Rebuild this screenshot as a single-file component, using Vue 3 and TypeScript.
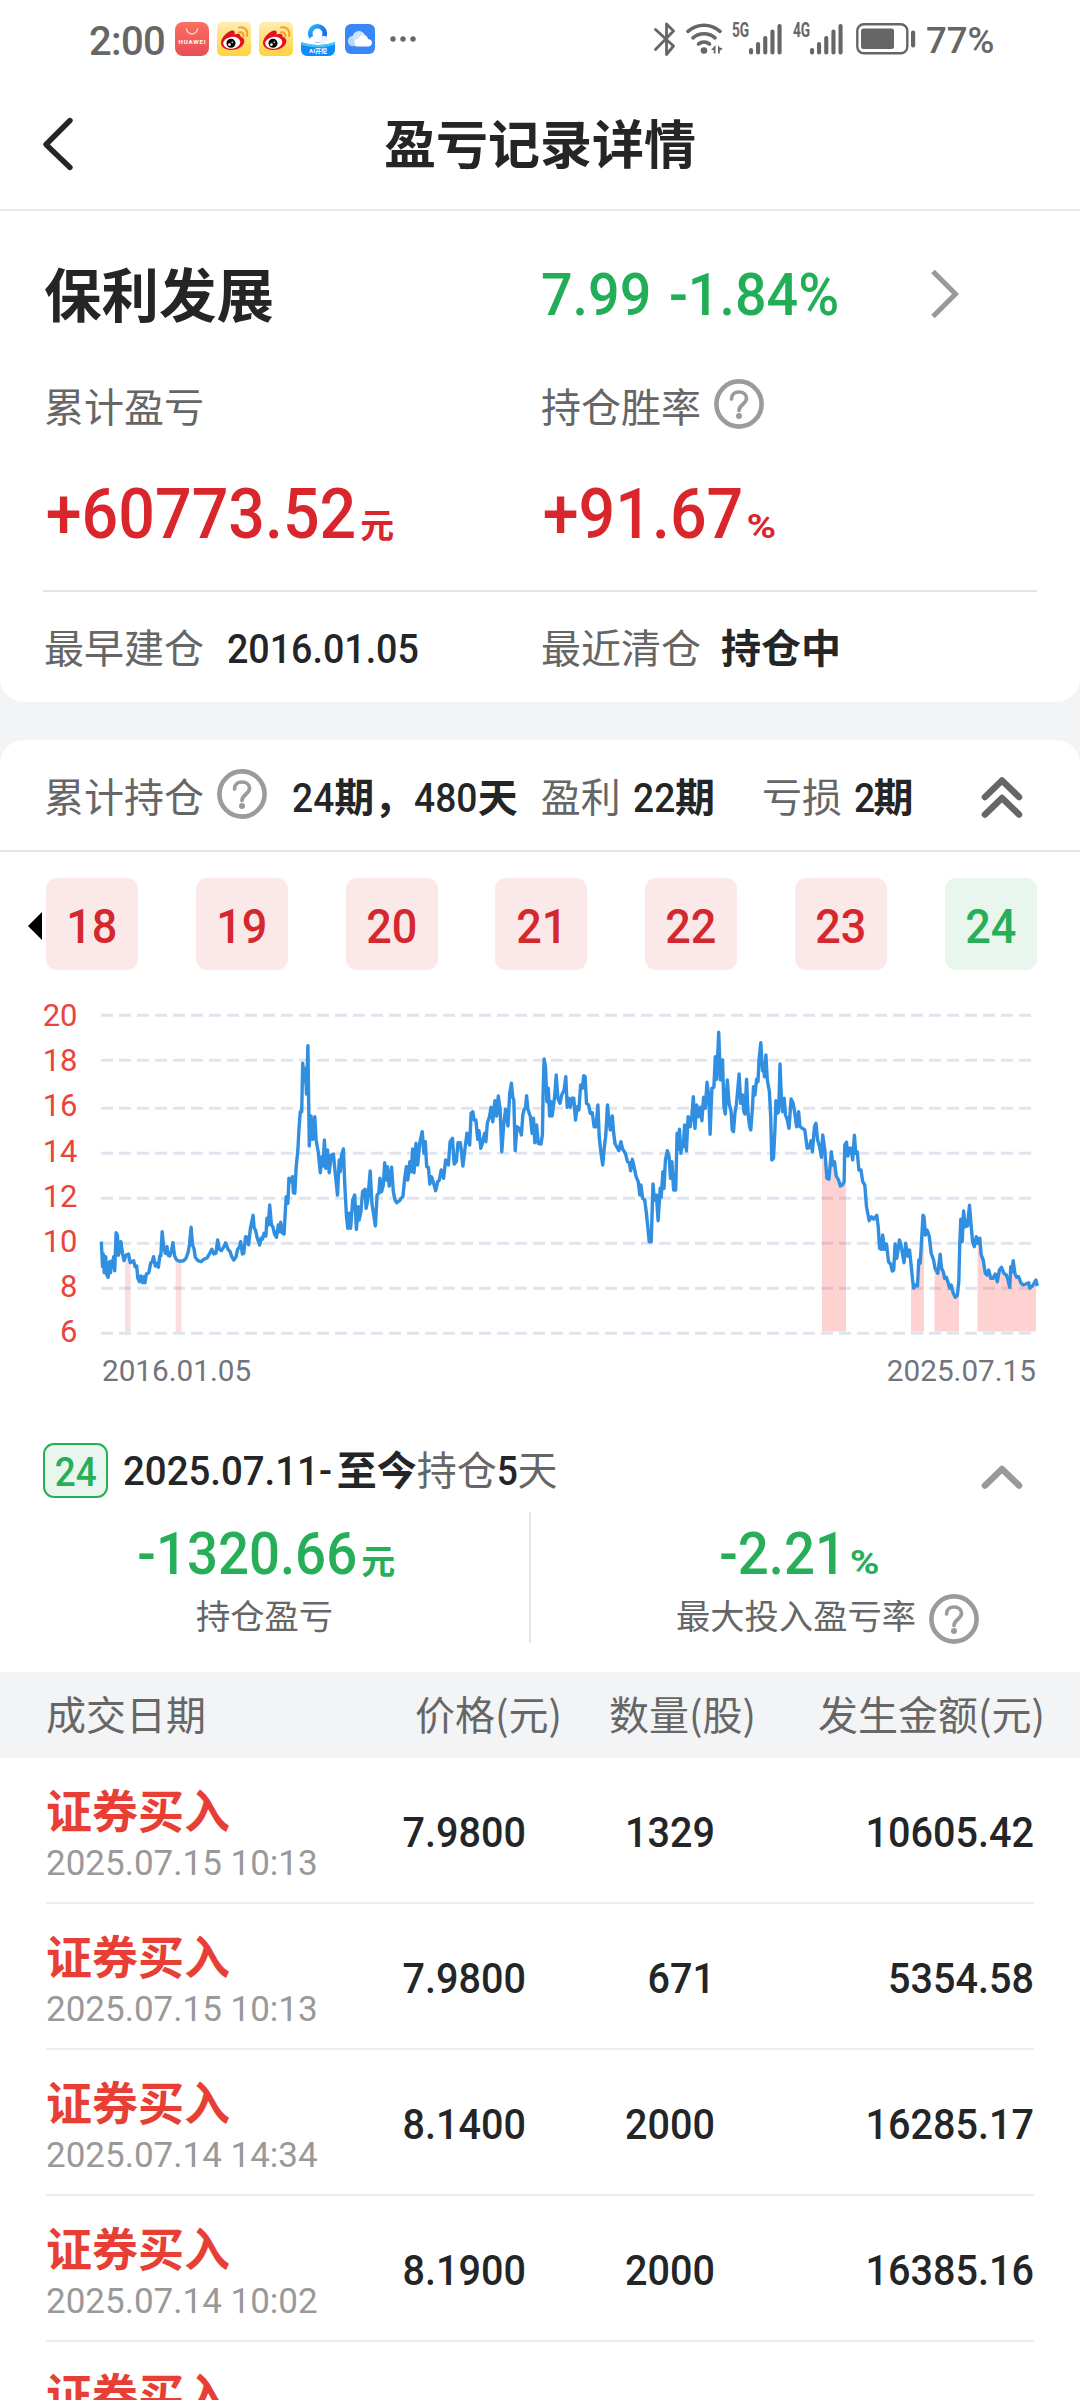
<script setup lang="ts">
import { computed } from 'vue'

interface Period { no: number; win: boolean }
interface Trade { time?: string; price?: string; qty?: string; amount?: string }

const periods: Period[] = [18, 19, 20, 21, 22, 23, 24].map((no) => ({ no, win: no !== 24 }))

const trades: Trade[] = [
  { time: '2025.07.15 10:13', price: '7.9800', qty: '1329', amount: '10605.42' },
  { time: '2025.07.15 10:13', price: '7.9800', qty: '671', amount: '5354.58' },
  { time: '2025.07.14 14:34', price: '8.1400', qty: '2000', amount: '16285.17' },
  { time: '2025.07.14 10:02', price: '8.1900', qty: '2000', amount: '16385.16' },
  {},
]

// Price samples as "x,y" pairs; first and second half of the period.
const firstHalf =
  '294,785 298,860 300,822 303,878 307,830 310,885 314,892 318,845 321,878 325,842 328,860 330,830 333,872 337,758 341,765 344,826 351,785 356,822 360,842 366,825 373,822 378,848 388,842 392,860 397,858 400,895 405,905 409,888 414,908 418,890 421,908 425,882 432,878 438,848 442,846 446,830 451,858 456,850 460,862 464,828 467,828 471,755 475,800 480,820 485,800 488,826 493,828 498,812 502,788 507,828 513,840 522,844 533,842 540,835 546,818 550,796 555,742 559,795 563,805 567,832 575,842 584,845 592,838 601,834 607,824 615,808 621,822 627,820 632,780 637,808 643,812 650,800 655,788 662,808 668,815 673,830 679,840 685,832 690,808 695,802 699,785 704,822 708,820 713,770 718,772 722,794 727,745 735,706 738,745 742,750 747,775 754,795 758,775 762,778 767,760 772,768 775,715 779,735 783,675 788,735 792,740 797,762 803,772 808,735 812,755 815,727 819,758 825,762 828,700 831,650 836,670 839,595 845,605 849,590 852,638 856,640 860,560 865,510 868,450 872,395 876,395 879,250 883,305 887,265 890,342 894,197 898,498 903,408 908,478 914,410 918,480 924,515 930,578 935,530 938,558 942,480 946,565 951,510 956,578 962,525 968,522 973,575 980,645 985,540 988,575 992,525 997,507 1001,610 1006,710 1010,745 1014,700 1018,745 1024,660 1030,645 1035,748 1040,680 1043,720 1048,695 1053,635 1060,628 1063,685 1068,660 1075,573 1080,670 1086,710 1090,738 1095,645 1100,640 1103,595 1108,635 1113,615 1117,548 1121,600 1125,560 1130,618 1137,562 1142,635 1147,660 1152,668 1160,662 1165,655 1170,650 1175,595 1180,560 1184,600 1190,545 1194,575 1198,507 1202,578 1208,490 1213,555 1219,488 1226,455 1231,520 1235,485 1239,560 1244,562 1248,612 1253,590 1258,605 1265,632 1271,605 1276,600 1281,570 1288,595 1294,540 1302,555 1307,485 1314,475 1319,552 1325,545 1330,488 1337,488 1344,558 1349,515 1356,460 1364,495 1368,400 1373,395 1377,420 1382,420 1387,478 1391,452 1396,505 1401,488 1407,460 1411,485 1415,430 1421,410 1426,382 1431,425 1437,362 1442,408 1447,348 1452,388 1457,515 1463,430 1468,388 1475,438 1480,340 1485,310 1489,352 1492,360 1496,512 1501,440 1508,445 1514,465 1518,405 1522,388 1526,385 1529,347 1533,388 1540,410 1545,460 1549,415 1553,488 1558,435 1563,490'
const secondHalf =
  '3,492 7,465 9,340 12,237 16,260 20,365 24,325 28,408 32,365 35,408 40,370 43,345 47,285 52,355 58,370 63,345 70,330 75,290 79,382 84,355 88,382 93,355 98,355 103,420 108,380 113,390 118,315 123,325 127,287 131,290 135,370 141,375 146,400 152,398 157,440 163,440 168,375 172,470 177,520 182,555 187,500 191,465 196,375 200,420 204,450 210,408 214,460 218,492 229,512 235,485 240,508 248,520 254,545 260,548 263,572 268,538 273,560 279,590 285,605 290,645 293,615 298,655 304,660 309,700 313,740 317,785 323,785 328,612 332,660 338,645 343,722 349,625 352,652 357,575 360,625 364,540 370,512 375,530 379,595 383,545 388,630 394,630 398,460 401,508 405,448 409,520 413,488 416,500 420,435 425,513 430,410 436,440 441,405 445,350 450,445 455,375 460,410 466,382 470,422 475,352 480,385 485,307 490,350 494,463 499,325 505,322 509,230 513,298 519,157 524,300 530,240 534,380 538,402 544,300 549,370 555,395 558,450 562,455 566,400 570,375 573,345 578,282 583,370 588,345 592,395 595,402 600,298 604,400 609,440 612,450 617,380 620,320 624,345 629,298 633,305 636,240 641,188 646,272 649,265 652,290 656,225 660,300 666,335 670,410 673,540 678,535 682,450 685,362 689,400 693,395 697,252 701,355 705,395 709,355 713,405 718,420 723,445 729,357 735,370 740,400 745,440 751,395 755,440 762,445 769,450 776,505 782,503 787,482 791,515 797,440 801,430 806,480 812,500 817,532 821,465 827,510 833,595 839,598 846,515 850,555 855,545 860,588 867,600 872,618 878,615 883,605 885,495 890,487 894,528 899,505 903,505 908,540 913,466 917,520 921,515 926,570 932,570 937,605 943,615 948,680 956,722 963,710 969,718 978,706 982,740 986,805 991,808 995,765 1000,808 1006,792 1012,845 1018,852 1023,873 1027,870 1031,792 1036,835 1044,780 1049,800 1057,848 1062,790 1067,828 1073,810 1078,860 1082,900 1085,925 1090,915 1096,918 1100,840 1104,850 1108,780 1112,706 1115,710 1119,765 1124,750 1130,768 1136,820 1143,840 1147,865 1155,880 1162,823 1166,865 1171,875 1175,895 1180,892 1190,925 1194,915 1200,940 1206,952 1212,945 1216,905 1219,790 1222,718 1226,785 1230,693 1235,740 1241,738 1247,676 1252,740 1256,785 1261,800 1267,770 1271,790 1277,775 1281,825 1287,840 1293,880 1298,885 1303,870 1309,895 1315,895 1322,882 1328,905 1334,870 1340,862 1347,880 1354,885 1359,900 1364,922 1367,860 1371,875 1374,842 1379,880 1384,892 1390,890 1396,908 1403,915 1411,912 1419,908 1422,925 1430,918 1440,900 1444,918'

const STEP_X = 2.9037
const STEP_Y = 3
const HALF = 1568

function scale(series: string, offset: number): string[] {
  return series.split(' ').map((pair) => {
    const [x, y] = pair.split(',').map(Number)
    return `${((x + offset) / STEP_X).toFixed(1)},${(y / STEP_Y + 10).toFixed(1)}`
  })
}

const linePoints = computed(() => [...scale(firstHalf, 0), ...scale(secondHalf, HALF)].join(' '))
const areaPoints = computed(() => `101,361.7 ${linePoints.value} 1038,361.7`)

const ticks = [20, 18, 16, 14, 12, 10, 8, 6].map((label, i) => ({
  label,
  grid: [45.3, 90.3, 138.3, 183.3, 228.3, 273.3, 318.3, 363.3][i],
  base: 56 + i * 45.2,
}))

const holdings = [
  { x: 125, w: 5.5, soft: true },
  { x: 175.7, w: 5.8, soft: true },
  { x: 822, w: 24, soft: false },
  { x: 911, w: 13, soft: false },
  { x: 934.5, w: 24.5, soft: false },
  { x: 977.5, w: 58.5, soft: false },
]

const bars = [
  { x: 0, y: 24 }, { x: 7, y: 18 }, { x: 14.2, y: 12 }, { x: 21.4, y: 5.5 }, { x: 28.5, y: 0 },
]
</script>

<template>
  <div class="screen">
    <header class="status">
      <span class="clock">2:00</span>
      <svg class="app huawei" width="34" height="34" viewBox="0 0 34 34">
        <defs><linearGradient id="hw" x1="0" y1="0" x2="0" y2="1"><stop offset="0" stop-color="#fb6f5f" /><stop offset="1" stop-color="#e84f57" /></linearGradient></defs>
        <rect width="34" height="34" rx="8" fill="url(#hw)" />
        <path d="M11.5 6.5a5.5 5.5 0 0 0 11 0" fill="none" stroke="#ffd9d2" stroke-width="1.3" />
        <text x="17" y="22.2" text-anchor="middle" font-size="6.2" font-weight="700" fill="#fff" textLength="27">HUAWEI</text>
      </svg>
      <svg v-for="n in 2" :key="n" class="app weibo" width="34" height="34" viewBox="0 0 34 34">
        <defs><linearGradient :id="'wb' + n" x1="0" y1="0" x2="0" y2="1"><stop offset="0" stop-color="#ffecb4" /><stop offset="1" stop-color="#ffd43c" /></linearGradient></defs>
        <rect width="34" height="34" rx="5" :fill="`url(#wb${n})`" />
        <path d="M4 21c0-5 6-11.500 11-12.500 3-.5 3 2 2.500 4 3-1.300 6.500-1.300 6 2.300 3 .8 4.500 3 3.500 6-1.300 4.600-7 7.200-12.500 7.200S4 25.500 4 21z" fill="#df131d" />
        <ellipse cx="14.800" cy="20.800" rx="8.600" ry="5.900" fill="#fff" transform="rotate(-8 14.800 20.800)" />
        <circle cx="14" cy="21.200" r="4.500" fill="#050505" />
        <circle cx="12.400" cy="22.600" r="1.400" fill="#fff" />
        <circle cx="15.200" cy="20.300" r=".8" fill="#fff" />
        <path d="M22 10.300c3-.6 5 1.300 4.300 4.200M22 5.500c5.500-1.200 9.500 3 8 8.500" fill="none" stroke="#fa9d28" stroke-width="2" stroke-linecap="round" />
      </svg>
      <svg class="app qq" width="34" height="34" viewBox="0 0 34 34">
        <defs><linearGradient id="qq" x1="0" y1="0" x2="1" y2="1"><stop offset="0" stop-color="#27b4ff" /><stop offset="1" stop-color="#0b55ee" /></linearGradient></defs>
        <path d="M0 20c9 4 25 4 34 0v8a6 6 0 0 1-6 6H6a6 6 0 0 1-6-6z" fill="#0f8cfb" />
        <path d="M0 20c9 4 25 4 34 0v2.500c-10 3.500-24 3.500-34 0z" fill="#44c6f7" />
        <circle cx="16.500" cy="11.500" r="7.300" fill="none" stroke="url(#qq)" stroke-width="4.600" />
        <path d="M11 20.500a3.200 3.200 0 0 1 1-6.200 5 5 0 0 1 9 .5 3 3 0 0 1 3 5.700z" fill="#fff" />
        <path d="M21 14.500a3.500 3.500 0 0 1 5.500 3.500 3 3 0 0 1-2 3h-6z" fill="#edf4ff" />
        <text x="17" y="31" text-anchor="middle" font-size="6" font-weight="700" fill="#fff">AI开挖</text>
      </svg>
      <svg class="app cloud" width="30" height="30" viewBox="0 0 30 30">
        <rect width="30" height="30" rx="6" fill="#3a87f8" />
        <circle cx="8" cy="17" r="5.200" fill="#b9d6fd" />
        <circle cx="14" cy="13.500" r="6.500" fill="#cfe3fe" />
        <path d="M11 22.500a5 5 0 0 1 0-7c3 0 3-4 7-4.500 3.500 0 4.500 2 5 4 3 .3 4 2 4 3.800 0 2.200-1.700 3.700-4 3.700z" fill="#fff" />
      </svg>
      <svg class="more" width="28" height="8" viewBox="0 0 28 8"><g fill="#666"><circle cx="4" cy="4" r="2.700" /><circle cx="14" cy="4" r="2.700" /><circle cx="24" cy="4" r="2.700" /></g></svg>

      <svg class="bt" width="22" height="35" viewBox="0 0 22 35"><path d="M1.500 7.500 19.500 24 12.500 32.500V2L19.500 9 1.500 27.500" fill="none" stroke="#666" stroke-width="2.800" stroke-linecap="round" stroke-linejoin="round" /></svg>
      <svg class="wifi" width="37" height="32" viewBox="0 0 37 32">
        <g fill="none" stroke="#666" stroke-width="3.600" stroke-linecap="round">
          <path d="M2 8.300a24 24 0 0 1 32 0" /><path d="M7 14.800a17 17 0 0 1 22 0" /><path d="M12.500 21a9 9 0 0 1 11 0" />
        </g>
        <circle cx="18" cy="27.500" r="3.300" fill="#666" />
        <path d="M29.500 22v8.500h-1.800V27H25zM32 22v8.500h1.800V28l3-2.500-3-1z" fill="#666" />
      </svg>
      <span class="net">5G</span>
      <svg class="signal" width="33" height="31" viewBox="0 0 33 31"><rect v-for="b in bars" :key="b.x" :x="b.x" :y="b.y" width="4.100" :height="30.500 - b.y" rx="2" fill="#666" /></svg>
      <span class="net second">4G</span>
      <svg class="signal" width="33" height="31" viewBox="0 0 33 31"><rect v-for="b in bars" :key="b.x" :x="b.x" :y="b.y" width="4.100" :height="30.500 - b.y" rx="2" fill="#666" /></svg>
      <svg class="battery" width="60" height="32" viewBox="0 0 60 32">
        <rect x="1.300" y="1.300" width="50" height="29" rx="6.500" fill="none" stroke="#666" stroke-width="2.400" />
        <rect x="5" y="5.500" width="33" height="20.500" rx="2.500" fill="#666" />
        <rect x="55" y="7.500" width="4.200" height="17" rx="2" fill="#666" />
      </svg>
      <span class="pct">77%</span>
    </header>

    <nav class="nav">
      <svg class="back" width="32" height="56" viewBox="0 0 32 56"><path d="M28 4.500 4 28.500 28 51.500" fill="none" stroke="#242527" stroke-width="5.400" stroke-linecap="round" stroke-linejoin="round" /></svg>
      <h1>盈亏记录详情</h1>
    </nav>

    <section class="card summary">
      <div class="cols name-row">
        <h2>保利发展</h2>
        <div class="quote">
          <span class="price">7.99 -1.84%</span>
          <svg width="32" height="52" viewBox="0 0 32 52"><path d="M4 3.500 26.500 26 4 48.500" fill="none" stroke="#999" stroke-width="5" /></svg>
        </div>
      </div>
      <div class="cols label-row">
        <span>累计盈亏</span>
        <span class="with-help">持仓胜率
          <svg class="help" width="50" height="50" viewBox="0 0 50 50"><circle cx="25" cy="25" r="22.600" fill="none" stroke="#9b9b9b" stroke-width="4.600" /><path d="M17.500 20c0-4.500 3-7 7.500-7s7.500 2.700 7.500 6.500c0 5.500-7.500 6-7.500 12" fill="none" stroke="#9b9b9b" stroke-width="3.700" stroke-linecap="round" /><circle cx="25" cy="37" r="3" fill="#9b9b9b" /></svg>
        </span>
      </div>
      <div class="cols value-row">
        <span class="big">+60773.52<small>元</small></span>
        <span class="big rate">+91.67<small class="p">%</small></span>
      </div>
      <div class="cols date-row">
        <span>最早建仓<b class="din">2016.01.05</b></span>
        <span>最近清仓<b class="zh">持仓中</b></span>
      </div>
    </section>

    <section class="card detail">
      <div class="total">
        <span>累计持仓</span>
        <svg class="help" width="50" height="50" viewBox="0 0 50 50"><circle cx="25" cy="25" r="22.600" fill="none" stroke="#9b9b9b" stroke-width="4.600" /><path d="M17.500 20c0-4.500 3-7 7.500-7s7.500 2.700 7.500 6.500c0 5.500-7.500 6-7.500 12" fill="none" stroke="#9b9b9b" stroke-width="3.700" stroke-linecap="round" /><circle cx="25" cy="37" r="3" fill="#9b9b9b" /></svg>
        <span class="dark t-days"><i>24</i>期，<i class="wide">480</i>天</span>
        <span class="t-win">盈利</span><span class="dark t-num"><i>22</i>期</span>
        <span class="t-loss">亏损</span><span class="dark t-num"><i>2</i>期</span>
        <svg class="fold" width="42" height="42" viewBox="0 0 42 42"><path d="M4 21 21 4.500 38 21M4 38.500 21 22 38 38.500" fill="none" stroke="#666" stroke-width="6.600" stroke-linecap="round" stroke-linejoin="round" /></svg>
      </div>

      <div class="chips">
        <svg class="prev" width="14" height="28" viewBox="0 0 14 28"><path d="M14 0v28L0 14z" fill="#000" /></svg>
        <div class="chip-list">
          <span v-for="p in periods" :key="p.no" class="chip" :class="{ loss: !p.win }"><em>{{ p.no }}</em></span>
        </div>
      </div>

      <svg class="chart" width="1080" height="430" viewBox="0 0 1080 430">
        <defs><clipPath id="under-line"><polygon :points="areaPoints" /></clipPath></defs>
        <g v-for="t in ticks" :key="t.label">
          <text x="77.500" :y="t.base" text-anchor="end" class="tick">{{ t.label }}</text>
          <line x1="101" x2="1032" :y1="t.grid" :y2="t.grid" stroke="#dfe4ee" stroke-width="3" stroke-dasharray="12 6" />
        </g>
        <g clip-path="url(#under-line)">
          <rect v-for="h in holdings" :key="h.x" :x="h.x" y="0" :width="h.w" height="361.700" :fill="h.soft ? 'rgba(225,70,75,.18)' : 'rgba(255,60,60,.23)'" />
        </g>
        <polyline :points="linePoints" fill="none" stroke="#318fe2" stroke-width="3.400" stroke-linejoin="round" />
        <text x="102" y="411" class="axis">2016.01.05</text>
        <text x="1036" y="411" text-anchor="end" class="axis">2025.07.15</text>
      </svg>

      <div class="period">
        <span class="badge"><em>24</em></span>
        <span class="dark range">2025.07.11-</span><span class="dark zh">至今</span><span>持仓</span><span class="dark five">5</span><span>天</span>
        <svg class="fold" width="42" height="26" viewBox="0 0 42 26"><path d="M4 21.500 21 5 38 21.500" fill="none" stroke="#999" stroke-width="6.600" stroke-linecap="round" stroke-linejoin="round" /></svg>
      </div>

      <div class="stats">
        <div class="stat">
          <span class="num">-1320.66<small>元</small></span>
          <span class="cap">持仓盈亏</span>
        </div>
        <div class="stat right">
          <span class="num">-2.21<small class="p">%</small></span>
          <span class="cap">最大投入盈亏率
            <svg class="help" width="50" height="50" viewBox="0 0 50 50"><circle cx="25" cy="25" r="22.600" fill="none" stroke="#9b9b9b" stroke-width="4.600" /><path d="M17.500 20c0-4.500 3-7 7.500-7s7.500 2.700 7.500 6.500c0 5.500-7.500 6-7.500 12" fill="none" stroke="#9b9b9b" stroke-width="3.700" stroke-linecap="round" /><circle cx="25" cy="37" r="3" fill="#9b9b9b" /></svg>
          </span>
        </div>
      </div>

      <div class="thead">
        <span>成交日期</span><span>价格(元)</span><span>数量(股)</span><span>发生金额(元)</span>
      </div>
      <div v-for="(t, i) in trades" :key="i" class="trade">
        <div class="kind"><strong>证券买入</strong><time>{{ t.time }}</time></div>
        <span>{{ t.price }}</span><span>{{ t.qty }}</span><span>{{ t.amount }}</span>
      </div>
    </section>
  </div>
</template>

<style>
html, body { margin: 0; background: #fff; }
</style>

<style scoped>
.screen {
  width: 1080px; height: 2400px; overflow: hidden; background: #f3f4f6;
  font-family: Roboto, "Noto Sans CJK SC", sans-serif; font-size: 40px; line-height: 1; color: #666;
  display: flex; flex-direction: column;
}
.screen * { box-sizing: border-box; }
svg { display: block; flex: none; }
span { white-space: nowrap; }
.dark { color: #242527; font-weight: 500; }

.status { height: 78px; flex: none; background: #fff; display: flex; align-items: center; padding-left: 89px; }
.clock { width: 86px; font-weight: 500; font-size: 40px; margin-top: 5px; letter-spacing: -.7px; }
.app { margin-right: 8px; }
.qq { margin-right: 10px; }
.cloud { margin-right: 14px; }
.bt { margin-left: auto; margin-right: 10px; }
.wifi { margin-right: 9px; }
.net { width: 17px; font-size: 19.500px; font-weight: 700; margin-top: -16px; transform: scaleX(.7); transform-origin: left; }
.second { margin-left: 11px; }
.battery { margin-left: 13px; margin-right: 10px; }
.pct { font-size: 36.500px; font-weight: 500; width: 154px; margin-top: 5px; }

.nav { height: 133px; flex: none; background: #fff; border-bottom: 2px solid #ebebeb; display: flex; align-items: center; padding: 0 0 0 42px; }
.nav h1 { margin: 0 auto; padding: 7px 74px 0 0; font-size: 52px; font-weight: 700; color: #242527; line-height: 60px; }

.card { background: #fff; flex: none; }
.summary { border-radius: 0 0 24px 24px; padding: 0 43px; height: 491px; }
.cols { display: grid; grid-template-columns: 497px 1fr; align-items: center; }
.cols > * { padding-left: 1px; }
.name-row { height: 166px; }
.name-row h2 { margin: 8px 0 0; font-size: 57.500px; line-height: 66px; color: #242527; font-weight: 700; }
.quote { display: flex; align-items: center; justify-content: space-between; padding-right: 76px; }
.price { color: #22ae56; font-size: 59px; font-weight: 500; word-spacing: 4px; transform: scaleX(.943); transform-origin: left; }
.label-row { height: 60px; padding-top: 3px; }
.with-help { display: flex; align-items: center; gap: 13px; }
.with-help .help { margin-top: -9px; }
.value-row { height: 155px; border-bottom: 2px solid #e5e5e5; }
.big { color: #d9262c; font-size: 70px; font-weight: 500; transform: scaleX(.922); transform-origin: left; padding-left: 3px; }
small { display: inline-block; font-size: 34px; font-weight: 700; margin-left: 4px; transform: scaleX(1.08); transform-origin: left; }
small.p { transform: scaleX(1.28); }
.date-row { height: 110px; padding-top: 5px; }
.date-row b { display: inline-block; color: #242527; margin-left: 23px; font-weight: 500; }
.date-row .din { transform: scaleX(.94); transform-origin: left; }
.date-row b.zh { font-weight: 700; margin-left: 20px; }

.detail { margin-top: 38px; border-radius: 24px 24px 0 0; height: 1700px; }
.total { height: 112px; border-bottom: 2px solid #e5e5e5; display: flex; align-items: center; padding: 7px 57px 0 44px; }
.total .help { margin: -9px 25px 0 13px; }
.total .dark { font-weight: 700; }
.total .fold { margin-top: -3px; }
.dark i { display: inline-block; font-style: normal; font-weight: 500; transform: scaleX(.93); transform-origin: left; margin-right: -3.200px; }
.dark i.wide { margin-right: -4.800px; }
.t-win { margin-left: 23px; }
.t-num { margin-left: 12px; }
.t-loss { margin-left: 47px; }
.fold { margin-left: auto; }

.chips { display: flex; align-items: center; margin-top: 26px; padding: 0 43px 0 28px; }
.prev { margin: 4px 4px 0 0; }
.chip-list { flex: 1; display: flex; justify-content: space-between; }
.chip { width: 92px; height: 92px; border-radius: 11px; background: #fbe8e9; color: #d5282e; font-size: 49px; font-weight: 500; line-height: 97px; text-align: center; }
em { display: inline-block; font-style: normal; transform: scaleX(.92); }
.chip.loss { background: #e8f6ed; color: #26ae58; }

.tick { font-size: 31px; fill: #e8453c; }
.axis { font-size: 29.700px; fill: #70757d; }

.period { display: flex; align-items: center; margin-top: 43px; height: 55px; padding: 0 57px 0 43px; }
.period > span { padding-top: 3px; }
.period > .badge { padding: 0; width: 65px; height: 55px; border: 2px solid #26ae58; border-radius: 11px; background: #e8f6ed; color: #26ae58; font-weight: 500; line-height: 56px; text-align: center; margin-right: 15px; }
.range { transform: scaleX(.96); transform-origin: left; margin-right: -4px; }
.five { transform: scaleX(.93); margin: 0 -1px; }
.period .zh { font-weight: 700; }
.period .fold { margin-top: 13px; }

.stats { display: flex; margin-top: 14px; height: 131px; }
.stat { width: 529px; display: flex; flex-direction: column; align-items: center; }
.stat.right { width: 551px; border-left: 2px solid #e5e5e5; padding-right: 19px; }
.num { color: #26ae58; font-size: 59px; font-weight: 500; transform: scaleX(.925); margin-top: 12px; height: 59px; }
.cap { font-size: 34.300px; height: 50px; margin-top: 9px; display: flex; align-items: center; gap: 13px; }
.cap .help { margin-right: -63px; margin-top: 4px; }

.thead { margin-top: 29px; height: 86px; background: #f3f4f6; font-family: "Noto Sans CJK SC", sans-serif; display: grid; grid-template-columns: 369px 194px 209px 1fr; align-items: center; padding: 0 0 5px 46px; }
.trade { height: 146px; margin: 0 46px; border-bottom: 2px solid #ededed; display: grid; grid-template-columns: 280px 200px 189px 1fr; align-items: center; }
.trade > span { color: #242527; font-size: 43px; font-weight: 500; text-align: right; padding-top: 4px; transform: scaleX(.92); transform-origin: right; }
.kind { display: flex; flex-direction: column; height: 98px; padding-top: 6px; }
.kind strong { color: #e73f35; font-size: 46px; line-height: 50px; }
.kind time { color: #999; font-size: 35px; line-height: 40px; margin-top: 7px; white-space: nowrap; }
</style>
